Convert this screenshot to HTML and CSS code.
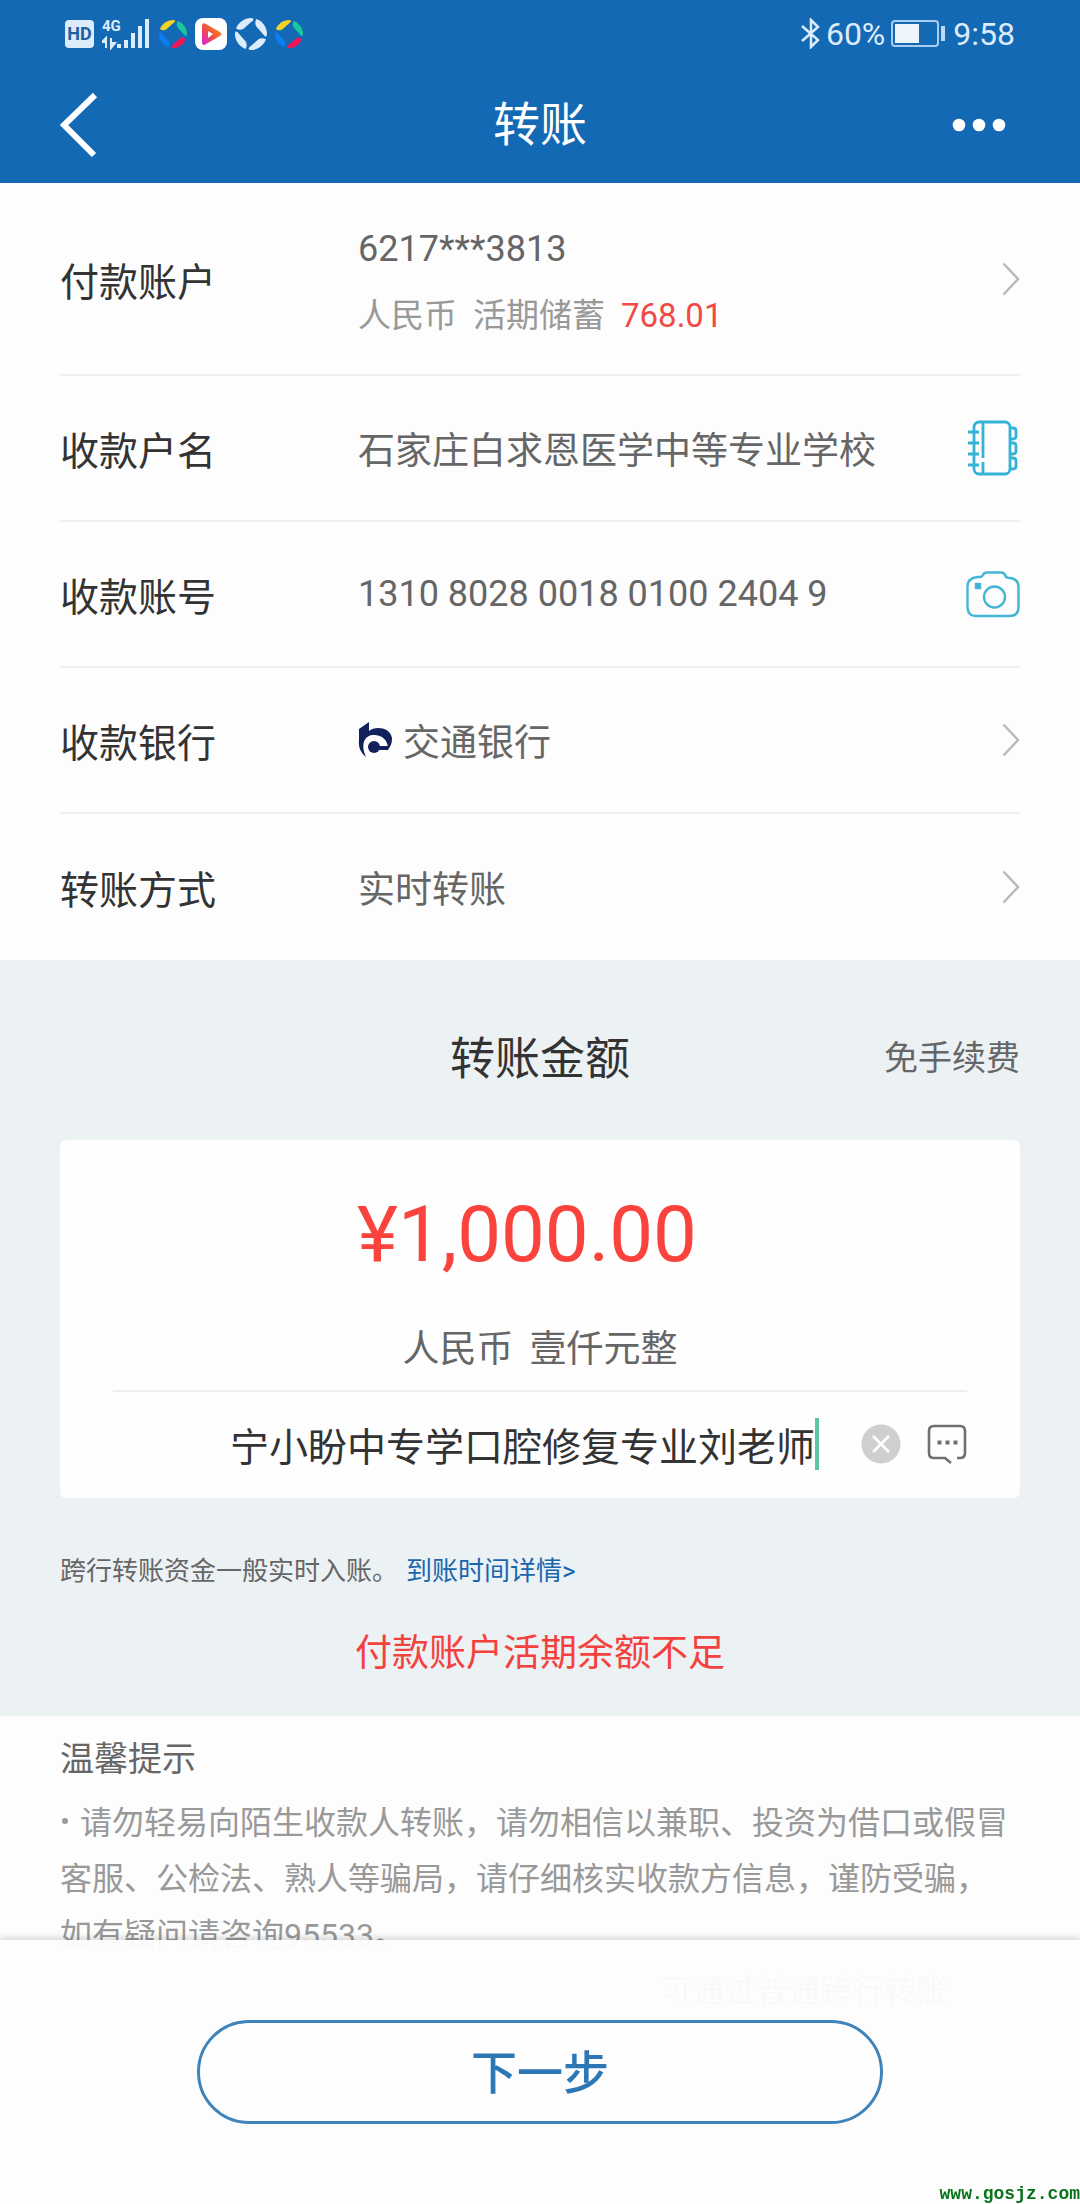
FILE: index.html
```html
<!DOCTYPE html>
<html lang="zh-CN">
<head>
<meta charset="utf-8">
<meta name="viewport" content="width=device-width">
<title>转账</title>
<link rel="stylesheet" href="styles.css">
</head>
<body>
<svg class="defs" aria-hidden="true">
  <symbol id="chevron" viewBox="0 0 18 34"><path d="M1.500 1.500 16 17 1.500 32.500" fill="none" stroke="#b9b9b9" stroke-width="2.400"/></symbol>
  <symbol id="petals" viewBox="0 0 30 30">
    <path class="p1" d="M1 10C3 4 9 0 15 0q3 0 2 2L8 10q-3 2-7 0z"/>
    <path class="p2" d="M20 1c6 2 10 8 10 14q0 3-2 2L20 8q-2-3 0-7z"/>
    <path class="p3" d="M29 20c-2 6-8 10-14 10q-3 0-2-2l9-8q3-2 7 0z"/>
    <path class="p4" d="M10 29C4 27 0 21 0 15q0-3 2-2l8 9q2 3 0 7z"/>
  </symbol>
</svg>

<header class="top">
  <div class="status">
    <div class="status-left">
      <span class="hd">HD</span>
      <svg class="signal" width="47" height="32" viewBox="0 0 47 32" fill="#dcecfb">
        <text x="0" y="13" font-size="15" font-weight="700">4G</text>
        <path d="M4 30V20L0 24h4M9 20v10l4-5h-4" stroke="#dcecfb" stroke-width="2"/>
        <path d="M15 26h4v4h-4zM22 22h4v8h-4zM29 15h4v15h-4zM36 8h4v22h-4zM43 1h4v29h-4z"/>
      </svg>
      <svg class="multi" width="28" height="30"><use href="#petals"/></svg>
      <svg width="32" height="32" viewBox="0 0 32 32">
        <defs><linearGradient id="play" x1="0" y1="1" x2="1" y2="0"><stop offset="0" stop-color="#d91ce6"/><stop offset=".5" stop-color="#f0553a"/><stop offset="1" stop-color="#f9a01b"/></linearGradient></defs>
        <rect width="32" height="32" rx="8" fill="#fff"/>
        <path d="M7 8q0-4 4-2l14 8q3 2 0 4l-14 8q-4 3-4-3z" fill="url(#play)"/><path d="M13 13l5 3-5 4z" fill="#fff"/>
      </svg>
      <svg class="mono" width="32" height="32"><use href="#petals"/></svg>
      <svg class="multi" width="28" height="30"><use href="#petals"/></svg>
    </div>
    <div class="status-right">
      <svg width="19" height="31" viewBox="0 0 19 31"><path d="M1 8l16 14-7 7V2l7 7L1 23" fill="none" stroke="#dcecfb" stroke-width="2.500"/></svg>
      <span>60%</span>
      <svg class="battery" width="54" height="27" viewBox="0 0 54 27"><rect x="1" y="1" width="46" height="25" rx="3" fill="none" stroke="#a9cdf0" stroke-width="2"/><path d="M4 4h24v19H4z" fill="#edf4fb"/><path d="M50 6h4v15h-4z" fill="#bcd9f5"/></svg>
      <span>9:58</span>
    </div>
  </div>
  <nav class="navbar">
    <button class="nav-btn" type="button" aria-label="返回"><svg width="38" height="66" viewBox="0 0 38 66"><path d="M35 3 4 33l30 30" fill="none" stroke="#fff" stroke-width="6"/></svg></button>
    <h1>转账</h1>
    <button class="nav-btn more" type="button" aria-label="更多"><svg width="54" height="14" viewBox="0 0 54 14" fill="#fff"><circle cx="7" cy="7" r="6.300"/><circle cx="27" cy="7" r="6.300"/><circle cx="47" cy="7" r="6.300"/></svg></button>
  </nav>
</header>

<main>
  <section class="form">
    <div class="row row-tall">
      <label for="payer">付款账户</label>
      <button id="payer" class="picker" type="button">
        <span class="account">
          <span class="account-no">6217***3813</span>
          <span class="account-sub"><span>人民币</span><span>活期储蓄</span><span class="balance">768.01</span></span>
        </span>
        <svg width="18" height="34"><use href="#chevron"/></svg>
      </button>
    </div>
    <div class="row">
      <label for="name">收款户名</label>
      <input id="name" class="field" type="text" value="石家庄白求恩医学中等专业学校">
      <button class="icon-btn" type="button" aria-label="通讯录">
        <svg width="54" height="56" viewBox="0 0 54 56" fill="none" stroke="#35b3d6" stroke-width="2.800"><rect x="8" y="2" width="36" height="52" rx="5"/><path d="M17 2v36M17 42v12M2 12h11M2 23h11M2 34h11M2 45h11M44 8h3q3 0 3 3v5q0 3-3 3h-3M44 23h3q3 0 3 3v5q0 3-3 3h-3M44 38h3q3 0 3 3v5q0 3-3 3h-3"/></svg>
      </button>
    </div>
    <div class="row">
      <label for="number">收款账号</label>
      <input id="number" class="field digits" type="text" value="1310 8028 0018 0100 2404 9">
      <button class="icon-btn" type="button" aria-label="拍照识别">
        <svg width="54" height="47" viewBox="0 0 54 47" fill="none" stroke="#45b5d4" stroke-width="2.400"><path d="M12 6h2q2 0 3-2 1-2.500 4-2.500h14q3 0 4 2.500 1 3 4 3h1q8.500 1 8.500 9v20q0 9-9 9h-33q-9 0-9-9V15q0-8 10.500-9z"/><circle cx="28.500" cy="26" r="10.500"/><rect x="10" y="13" width="4" height="4" fill="#35a9cc"/></svg>
      </button>
    </div>
    <div class="row">
      <label for="bank">收款银行</label>
      <button id="bank" class="picker" type="button">
        <span class="bank">
          <svg width="35" height="36" viewBox="0 0 35 36" fill="#12205c"><path d="M1 7 11 0v9C17 4 32 5 34 16c0 5-1 8-4 11 0-9-6-14-14-14C7 13 2 21 8 35 3 31 0 25 1 18z"/><circle cx="16" cy="25" r="6"/><path d="M18 24h14l-2 4H18z"/></svg>
          <span>交通银行</span>
        </span>
        <svg width="18" height="34"><use href="#chevron"/></svg>
      </button>
    </div>
    <div class="row">
      <label for="method">转账方式</label>
      <button id="method" class="picker" type="button"><span>实时转账</span><svg width="18" height="34"><use href="#chevron"/></svg></button>
    </div>
  </section>

  <section class="amount">
    <div class="amount-head">
      <h2><label for="sum">转账金额</label></h2>
      <span class="fee">免手续费</span>
    </div>
    <div class="card">
      <input id="sum" class="sum" type="text" value="¥1,000.00">
      <p class="words"><span>人民币</span><span>壹仟元整</span></p>
      <div class="remark">
        <input type="text" aria-label="附言" value="宁小盼中专学口腔修复专业刘老师">
        <span class="caret"></span>
        <button class="clear" type="button" aria-label="清除"><svg width="40" height="40" viewBox="0 0 40 40"><circle cx="20" cy="20" r="19.500" fill="#cfcfcf"/><path d="M12 12l16 16M28 12 12 28" stroke="#fff" stroke-width="2.600"/></svg></button>
        <button type="button" aria-label="常用附言"><svg width="40" height="40" viewBox="0 0 40 40" fill="none" stroke="#707070" stroke-width="2.600"><path d="M30 34h3q5 0 5-5V7q0-5-5-5H7Q2 2 2 7v22q0 5 5 5h11l6 5"/><path d="M10.500 18.500h4M18.500 18.500h4M26.500 18.500h4" stroke-width="4"/></svg></button>
      </div>
    </div>
    <p class="note"><span>跨行转账资金一般实时入账。</span><a href="#">到账时间详情&gt;</a></p>
    <p class="error">付款账户活期余额不足</p>
  </section>

  <section class="tips">
    <h3>温馨提示</h3>
    <ul>
      <li>请勿轻易向陌生收款人转账，请勿相信以兼职、投资为借口或假冒客服、公检法、熟人等骗局，请仔细核实收款方信息，谨防受骗，如有疑问请咨询95533。</li>
      <li class="second">可通过普通跨行转账</li>
    </ul>
  </section>
</main>

<footer class="footer">
  <button class="next" type="button">下一步</button>
  <span class="site">www.gosjz.com</span>
</footer>
</body>
</html>
```
FILE: styles.css
```css
* { box-sizing: border-box; }

body {
  margin: 0;
  min-height: 100vh;
  background: #fdfdfd;
  color: #333;
  font-family: Roboto, "Noto Sans CJK SC", sans-serif;
}

h1, h2, h3, p, ul { margin: 0; padding: 0; font-weight: 400; }
svg { display: block; flex: none; }
button, input {
  margin: 0;
  padding: 0;
  border: 0;
  background: none;
  color: inherit;
  font: inherit;
  min-width: 0;
}
.defs { position: absolute; width: 0; height: 0; }

/* Header */
.top { background: #1469b5; color: #fff; }
.status {
  display: flex;
  justify-content: space-between;
  align-items: center;
  height: 67px;
  padding: 0 65px;
  color: #dcecfb;
  font-size: 32px;
}
.status-left { display: flex; align-items: center; gap: 8px; }
.status-right { display: flex; align-items: center; gap: 6px; }
.hd {
  width: 29px;
  border-radius: 4px;
  background: #dcecfb;
  color: #1f5f9e;
  font-size: 18px;
  font-weight: 700;
  line-height: 28px;
  text-align: center;
}
.signal { margin-right: 2px; }
.battery { margin-right: 2px; }
.multi { --a: #f4d423; --b: #19c79a; --c: #ee1657; --d: #0c7df2; }
.p1 { fill: var(--a, #dcecfb); }
.p2 { fill: var(--b, #dcecfb); }
.p3 { fill: var(--c, #dcecfb); }
.p4 { fill: var(--d, #dcecfb); }

.navbar {
  display: grid;
  grid-template-columns: 1fr auto 1fr;
  align-items: center;
  height: 116px;
  padding: 0 60px;
}
.navbar h1 { font-size: 47px; line-height: 116px; }
.nav-btn { justify-self: start; }
.more { justify-self: end; padding-right: 14px; }

/* Transfer form */
.form { padding: 0 60px; }
.row {
  display: flex;
  align-items: center;
  height: 146px;
  border-bottom: 2px solid #efedee;
  color: #666;
  font-size: 37px;
}
.row-tall { height: 193px; }
.row:last-child { border-bottom: 0; }
.row label { flex: 0 0 298px; color: #333; font-size: 39px; }
.picker {
  flex: 1;
  display: flex;
  align-items: center;
  justify-content: space-between;
  text-align: left;
}
.field { flex: 1; }
.digits { font-size: 36px; }
.account { display: flex; flex-direction: column; padding-top: 6px; }
.account-no { font-size: 36px; line-height: 68px; }
.account-sub { display: flex; gap: 16px; color: #999; font-size: 33px; line-height: 66px; }
.balance { color: #f04a46; }
.bank { display: flex; align-items: center; gap: 10px; }

/* Amount */
.amount { padding: 0 60px 32px; background: #ecf1f4; }
.amount-head {
  display: grid;
  grid-template-columns: 1fr auto 1fr;
  align-items: center;
  height: 180px;
  padding-top: 10px;
}
.amount-head h2 { grid-column: 2; font-size: 45px; }
.fee { justify-self: end; color: #666; font-size: 34px; }
.card { padding-top: 44px; border-radius: 6px; background: #fefefe; }
.sum {
  display: block;
  width: 100%;
  height: 100px;
  padding-right: 26px;
  color: #f9433c;
  font-size: 78px;
  text-align: center;
}
.words {
  display: flex;
  justify-content: center;
  gap: 16px;
  padding-top: 26px;
  color: #666;
  font-size: 37px;
  line-height: 80px;
}
.remark {
  display: flex;
  align-items: center;
  height: 108px;
  margin: 0 53px;
  padding-bottom: 2px;
  border-top: 2px solid #f1eff1;
}
.remark input { flex: 1; color: #333; font-size: 39px; text-align: right; }
.caret { width: 4px; height: 52px; background: #5cc7a8; }
.clear { margin: 0 26px 0 42px; }

.note {
  display: flex;
  gap: 8px;
  padding-top: 47px;
  color: #666;
  font-size: 26px;
  line-height: 52px;
}
.note a { color: #1a66ad; text-decoration: none; }
.error {
  padding-top: 27px;
  color: #f5413d;
  font-size: 37px;
  line-height: 60px;
  text-align: center;
}

/* Tips */
.tips { padding: 17px 62px 0 60px; }
.tips h3 { color: #666; font-size: 34px; line-height: 52px; }
.tips ul {
  padding-top: 10px;
  color: #999;
  font-size: 32px;
  line-height: 56px;
  list-style: none;
}
.tips li::before {
  content: "";
  display: inline-block;
  width: 6px;
  height: 6px;
  margin: 0 12px 10px 2px;
  border-radius: 50%;
  background: #999;
}
.tips .second { padding-left: 600px; }
.tips .second::before { content: none; }

/* Fixed action bar */
.footer {
  position: fixed;
  right: 0;
  bottom: 0;
  left: 0;
  padding: 80px 197px;
  background: rgba(253, 253, 253, .96);
  box-shadow: 0 -3px 6px rgba(0, 0, 0, .14);
}
.next {
  display: block;
  width: 100%;
  height: 104px;
  padding-bottom: 6px;
  border: 3px solid #3f83bb;
  border-radius: 52px;
  background: #fefefe;
  color: #2d77b5;
  font-size: 46px;
  font-weight: 500;
}
.site {
  position: absolute;
  right: 0;
  bottom: 0;
  color: #087318;
  font: 700 18px/20px "Liberation Mono", monospace;
}
```
